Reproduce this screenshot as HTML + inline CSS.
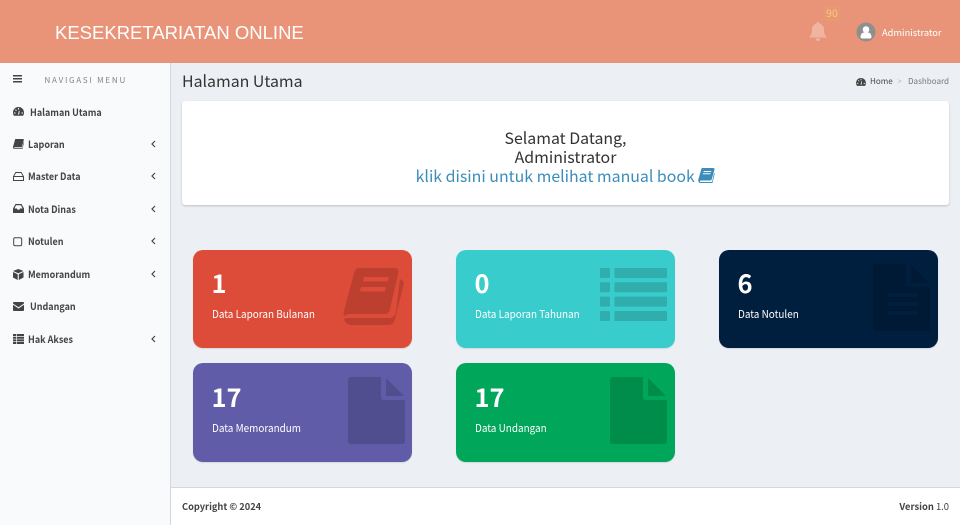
<!DOCTYPE html>
<html><head><meta charset="utf-8"><style>
*{box-sizing:border-box;margin:0;padding:0}
html,body{width:960px;height:525px;overflow:hidden;background:#ecf0f5}
body{position:relative;font-family:"Noto Sans CJK SC","Noto Sans CJK JP","Liberation Sans",sans-serif;color:#333}
.a{position:absolute;white-space:nowrap}
.m{position:absolute;left:28px;font-size:10px;line-height:14px;font-weight:700;color:#444;white-space:nowrap;transform:scaleX(.9);transform-origin:0 50%;margin-top:-.5px}
.ic{position:absolute;fill:#444}
.chev{position:absolute;left:151px;width:5px;height:8px;fill:none;stroke:#444;stroke-width:1.2}
.box{position:absolute;width:219px;height:98.500px;border-radius:10px;box-shadow:0 1px 1px rgba(0,0,0,.1)}
.num{position:absolute;left:18.500px;top:13px;font-size:25.500px;line-height:40px;font-weight:700;color:#fff}
.lb{position:absolute;left:18.500px;top:55px;font-size:10.800px;line-height:18px;color:#fff;white-space:nowrap;transform:scaleX(.92);transform-origin:0 50%}
.bi{position:absolute;fill:rgba(0,0,0,.15)}
</style></head><body>
<div class="a" style="left:0;top:0;width:960px;height:63px;background:#e99478"></div>
<div class="a" style="left:55px;top:20px;font-family:'Liberation Sans',sans-serif;font-size:18.500px;line-height:25px;color:#fff">KESEKRETARIATAN ONLINE</div>
<svg class="a" style="left:809px;top:22px;fill:#f0b5a2" width="18" height="20" viewBox="0 0 18 20"><path d="M9 0c1 0 1.600.7 1.600 1.600 3 .7 4.400 3.200 4.400 6.400 0 4 1.300 5.500 3 7.500H0c1.700-2 3-3.500 3-7.500 0-3.200 1.400-5.700 4.400-6.400C7.400.7 8 0 9 0zM6.700 16.500h4.600C11.200 18 10.300 19 9 19s-2.200-1-2.300-2.500z"/></svg>
<div class="a" style="left:824px;top:6px;width:16px;height:15px;background:#e99a6c;border-radius:3px;color:#f8c59a;font-size:10.500px;line-height:15px;text-align:center">90</div>
<svg class="a" style="left:856px;top:22px" width="20" height="20" viewBox="0 0 20 20"><circle cx="10" cy="10" r="9.500" fill="#8f8f8f"/><circle cx="10" cy="7.500" r="3.300" fill="#fff"/><path d="M4.500 15c0-3 2-4.500 3.500-4.500h4c1.500 0 3.500 1.500 3.500 4.500 0 1.200-1 1.500-2 1.500h-7c-1 0-2-.3-2-1.500z" fill="#fff"/></svg>
<div class="a" style="left:882px;top:24px;font-size:9.300px;line-height:16px;color:#fff">Administrator</div>

<div class="a" style="left:0;top:63px;width:171px;height:462px;background:#f9fafc;border-right:1px solid #d2d6de"></div>
<svg class="ic" style="left:13px;top:75px" width="9" height="8" viewBox="0 0 9 8"><path d="M0 0h9v1.500H0zM0 3h9v1.500H0zM0 6h9v1.500H0z"/></svg>
<div class="a" style="left:44.500px;top:73.500px;font-size:8px;line-height:14px;letter-spacing:1.770px;color:#848484">NAVIGASI MENU</div>

<svg class="ic" style="left:13px;top:107px" width="11" height="9" viewBox="0 0 11 9"><path d="M5.500 0C2.400 0 0 2.400 0 5.500c0 1.200.3 2.300.9 3.300h9.200c.6-1 .9-2.100.9-3.300C11 2.400 8.600 0 5.500 0zM5 1h1v1.500H5zM2 3l1-.6.800 1-.8.6zM1 5.500h1.500v1H1zM8.500 5.500H10v1H8.500zM5 7.500l1-4 .6.200L6.200 7.500z"/></svg>
<div class="m" style="left:30px;top:105px">Halaman Utama</div>
<svg class="ic" style="left:13px;top:139px" width="11" height="10" viewBox="0 0 11 10"><path d="M2.700 0h7.300c.7 0 1 .5.800 1.100L9 7.500c-.2.600-.6.800-1.200.8H1.700c-.5 0-.7.400-.6.600.1.300.3.400.7.400h7.400l1.300-6 .5.300-1.500 6.400H1.500C.5 10 0 9.200 0 8.200c0-.3 0-.6.200-1L2 .8C2.100.3 2.300 0 2.700 0z"/></svg>
<div class="m" style="top:137px">Laporan</div>
<svg class="chev" style="top:140px" viewBox="0 0 5 8"><path d="M4 1 1 4l3 3"/></svg>
<svg class="ic" style="left:13px;top:172px" width="11" height="9" viewBox="0 0 11 9"><path fill-rule="evenodd" d="M2.500 0h6L11 4.500V9H0V4.500zM3 1 1.300 4h8.400L8 1zM1 5v3h9V5z"/></svg>
<div class="m" style="top:169.500px">Master Data</div>
<svg class="chev" style="top:172px" viewBox="0 0 5 8"><path d="M4 1 1 4l3 3"/></svg>
<svg class="ic" style="left:13px;top:204px" width="11" height="9" viewBox="0 0 11 9"><path fill-rule="evenodd" d="M2.500 0h6L11 4.500V9H0V4.500zM3 1.200 1.500 4.500h2.400l.8 1.300h1.600l.8-1.300h2.400L8 1.200z"/></svg>
<div class="m" style="top:202px">Nota Dinas</div>
<svg class="chev" style="top:204.500px" viewBox="0 0 5 8"><path d="M4 1 1 4l3 3"/></svg>
<svg class="ic" style="left:13px;top:236.500px;fill:none;stroke:#444;stroke-width:1" width="10" height="10" viewBox="0 0 10 10"><rect x=".7" y=".7" width="8" height="8" rx="1.500"/></svg>
<div class="m" style="top:234.500px">Notulen</div>
<svg class="chev" style="top:237px" viewBox="0 0 5 8"><path d="M4 1 1 4l3 3"/></svg>
<svg class="ic" style="left:13px;top:268.500px" width="10.500" height="11" viewBox="0 0 10.500 11"><path d="M5.250 0 10.500 2 5.250 4.300 0 2zM0 3l4.700 2.200V11L0 8.500zM10.500 3 5.800 5.200V11l4.700-2.500z"/></svg>
<div class="m" style="top:267px">Memorandum</div>
<svg class="chev" style="top:269.500px" viewBox="0 0 5 8"><path d="M4 1 1 4l3 3"/></svg>
<svg class="ic" style="left:13px;top:302px" width="11" height="9" viewBox="0 0 11 9"><path d="M1 0h9c.6 0 1 .4 1 1v.5L5.500 5.200 0 1.500V1c0-.6.400-1 1-1zM0 2.800l5.500 3.700L11 2.800V8c0 .6-.4 1-1 1H1c-.6 0-1-.4-1-1z"/></svg>
<div class="m" style="left:30px;top:299.500px">Undangan</div>
<svg class="ic" style="left:13px;top:334px" width="11" height="10" viewBox="0 0 11 10"><path d="M0 0h3v2H0zM0 2.700h3v2H0zM0 5.400h3v2H0zM0 8h3v2H0zM3.700 0H11v2H3.700zM3.700 2.700H11v2H3.700zM3.700 5.400H11v2H3.700zM3.700 8H11v2H3.700z" /></svg>
<div class="m" style="top:332px">Hak Akses</div>
<svg class="chev" style="top:334.500px" viewBox="0 0 5 8"><path d="M4 1 1 4l3 3"/></svg>

<div class="a" style="left:182px;top:67.500px;font-size:15.900px;line-height:25px;color:#333">Halaman Utama</div>
<svg class="ic" style="left:856px;top:78px" width="10" height="8" viewBox="0 0 11 9"><path d="M5.500 0C2.400 0 0 2.400 0 5.500c0 1.200.3 2.300.9 3.300h9.200c.6-1 .9-2.100.9-3.300C11 2.400 8.600 0 5.500 0zM5 1h1v1.500H5zM2 3l1-.6.800 1-.8.6zM1 5.500h1.500v1H1zM8.500 5.500H10v1H8.500zM5 7.500l1-4 .6.200L6.200 7.500z"/></svg>
<div class="a" style="left:870px;top:75px;font-size:8.100px;line-height:14px;color:#444">Home</div>
<div class="a" style="left:897.500px;top:75px;font-size:8px;line-height:14px;color:#bbb">&gt;</div>
<div class="a" style="left:908px;top:75px;font-size:8.050px;line-height:14px;color:#777">Dashboard</div>

<div class="a" style="left:182px;top:101px;width:767px;height:104px;background:#fff;border-radius:3px;box-shadow:0 1px 2px rgba(0,0,0,.2)"></div>
<div class="a" style="left:182px;top:128px;width:767px;text-align:center;font-size:15.900px;line-height:19px;color:#333">Selamat Datang,<br>Administrator<br><span style="color:#3c8dbc">klik disini untuk melihat manual book <svg style="display:inline-block;vertical-align:-1px;fill:#3c8dbc" width="17" height="15" viewBox="0 0 11 10"><path d="M2.700 0h7.300c.7 0 1 .5.800 1.100L9 7.500c-.2.600-.6.800-1.200.8H1.700c-.5 0-.7.400-.6.600.1.300.3.400.7.400h7.400l1.300-6 .5.300-1.500 6.400H1.500C.5 10 0 9.200 0 8.200c0-.3 0-.6.200-1L2 .8C2.100.3 2.300 0 2.700 0zM3.700 2l-.2.7h5l.2-.7zM3.200 3.500 3 4.200h5l.2-.7z" fill-rule="evenodd"/></svg></span></div>

<div class="box" style="left:193px;top:249.500px;background:#dd4b39"><div class="num">1</div><div class="lb">Data Laporan Bulanan</div>
<svg class="bi" style="left:148.500px;top:17.500px" width="63" height="60" viewBox="0 0 63 60"><path fill-rule="evenodd" d="M17 1h35c4 0 5 2 4 6L48 42c-1 4-2 5-6 5H8c-3 0-5 1-5 2L2 48c-1-2 0-4 .5-6L12 6c1-3 2-5 5-5zM22 10l-1.300 4.500h25L47 10zM19 20l-1.300 4.500h25L44 20zM4 51h43c4 0 6-2 7-6L58 12l3 2c1 1 1 2 .5 4L53 52c-1 4-3 6-7 6H10c-4 0-7-2-8-6z"/></svg></div>

<div class="box" style="left:456px;top:249.500px;background:#39cccc;width:218.500px"><div class="num">0</div><div class="lb">Data Laporan Tahunan</div>
<svg class="bi" style="left:144px;top:18px" width="67" height="53" viewBox="0 0 67 53"><rect width="10" height="10" rx="1"/><rect y="14.300" width="10" height="10" rx="1"/><rect y="28.600" width="10" height="10" rx="1"/><rect y="43" width="10" height="10" rx="1"/><rect x="14.500" width="52.500" height="10" rx="1"/><rect x="14.500" y="14.300" width="52.500" height="10" rx="1"/><rect x="14.500" y="28.600" width="52.500" height="10" rx="1"/><rect x="14.500" y="43" width="52.500" height="10" rx="1"/></svg></div>

<div class="box" style="left:719px;top:249.500px;background:#001f3f"><div class="num">6</div><div class="lb">Data Notulen</div>
<svg class="bi" style="left:154px;top:14px" width="57" height="67" viewBox="0 0 57 67"><path fill-rule="evenodd" d="M3 0h30v20c0 2 1 3 3 3h21v41c0 2-1 3-3 3H3c-2 0-3-1-3-3V3c0-2 1-3 3-3zM15 29v4h30v-4zM15 38v4h30v-4zM15 47v4h30v-4z"/><path d="M38 1l18 18H38z"/></svg></div>

<div class="box" style="left:193px;top:363px;background:#605ca8"><div class="num" style="top:14px">17</div><div class="lb" style="top:55.500px">Data Memorandum</div>
<svg class="bi" style="left:155px;top:14px" width="57" height="67" viewBox="0 0 57 67"><path d="M3 0h30v20c0 2 1 3 3 3h21v41c0 2-1 3-3 3H3c-2 0-3-1-3-3V3c0-2 1-3 3-3z"/><path d="M38 1l18 18H38z"/></svg></div>

<div class="box" style="left:456px;top:363px;background:#00a65a;width:218.500px"><div class="num" style="top:14px">17</div><div class="lb" style="top:55.500px">Data Undangan</div>
<svg class="bi" style="left:154px;top:14px" width="57" height="67" viewBox="0 0 57 67"><path d="M3 0h30v20c0 2 1 3 3 3h21v41c0 2-1 3-3 3H3c-2 0-3-1-3-3V3c0-2 1-3 3-3z"/><path d="M38 1l18 18H38z"/></svg></div>

<div class="a" style="left:171px;top:487px;width:789px;height:38px;background:#fff;border-top:1px solid #d2d6de"></div>
<div class="a" style="left:182px;top:499px;font-size:9.250px;line-height:15px;font-weight:700;color:#444">Copyright © 2024</div>
<div class="a" style="right:11px;top:499px;font-size:9.400px;line-height:15px;color:#444"><b>Version</b> 1.0</div>
</body></html>
